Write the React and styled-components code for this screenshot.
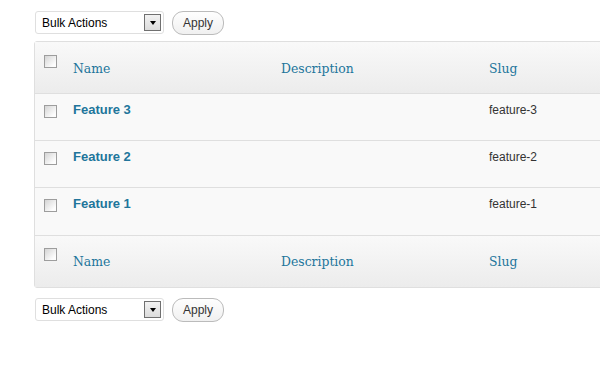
import React from "react";
import styled, { createGlobalStyle } from "styled-components";

const Global = createGlobalStyle`
  html, body { margin: 0; padding: 0; background: #fff; overflow: hidden; }
  body { font-family: "Liberation Sans", Arial, sans-serif; }
`;

const Page = styled.div`
  width: 600px;
  height: 373px;
  padding: 11px 0 0 34px;
  box-sizing: border-box;
  overflow: hidden;
`;

const Toolbar = styled.div`
  display: flex;
  align-items: center;
  gap: 8px;
  padding-left: 1px;
  height: 23px;
  margin-bottom: ${(p) => (p.$top ? "7px" : "0")};
  margin-top: ${(p) => (p.$top ? "0" : "10px")};
`;

const Select = styled.div`
  box-sizing: border-box;
  width: 129px;
  height: 23px;
  border: 1px solid #dfdfdf;
  border-radius: 3px;
  background: #fff;
  display: flex;
  align-items: center;
  justify-content: space-between;
  padding: 0 2px 0 6px;
  font-size: 12px;
  color: #000;
`;

const Arrow = styled.span`
  box-sizing: border-box;
  width: 17px;
  height: 17px;
  border: 1px solid #707070;
  background: linear-gradient(#f2f2f2, #dcdcdc);
  display: flex;
  align-items: center;
  justify-content: center;
  &::after {
    content: "";
    border-left: 3.5px solid transparent;
    border-right: 3.5px solid transparent;
    border-top: 4px solid #000;
    margin-top: 1px;
  }
`;

const Button = styled.button`
  box-sizing: border-box;
  height: 24px;
  width: 52px;
  border: 1px solid #bbb;
  border-radius: 11px;
  background: linear-gradient(#fefefe, #f0f0f0);
  color: #333;
  font-family: "Liberation Sans", Arial, sans-serif;
  font-size: 12px;
  padding: 0;
`;

const Table = styled.table`
  border-collapse: separate;
  border-spacing: 0;
  border: 1px solid #dfdfdf;
  border-radius: 3px;
  width: 760px;
  table-layout: fixed;
  background: #f9f9f9;
`;

const HeadCell = styled.th`
  height: 52px;
  box-sizing: border-box;
  padding: ${(p) => (p.$foot ? "0 8px 1px" : "2px 8px 0")};
  text-align: left;
  font-family: Georgia, "DejaVu Serif", serif;
  font-weight: normal;
  font-size: 12.4px;
  color: #21759b;
  background: linear-gradient(#f9f9f9, #ececec);
  border-top: ${(p) => (p.$foot ? "1px solid #dfdfdf" : "none")};
  border-bottom: ${(p) => (p.$foot ? "none" : "1px solid #dfdfdf")};
  vertical-align: middle;
  width: ${(p) => p.$w || "auto"};
  white-space: nowrap;
`;

const CheckCell = styled.th`
  width: 30px;
  box-sizing: border-box;
  padding: ${(p) => (p.$body ? "11px 0 0 9px" : p.$foot ? "12px 0 0 9px" : "13px 0 0 9px")};
  vertical-align: top;
  background: ${(p) => (p.$body ? "#f9f9f9" : "linear-gradient(#f9f9f9, #ececec)")};
  border-bottom: ${(p) => (p.$last || p.$foot ? "none" : "1px solid #dfdfdf")};
  border-top: ${(p) => (p.$foot ? "1px solid #dfdfdf" : "none")};
`;

const Box = styled.span`
  display: block;
  box-sizing: border-box;
  width: 13px;
  height: 13px;
  border: 1px solid #9d9d9d;
  background: linear-gradient(135deg, #d4d4d4, #fdfdfd 80%);
`;

const Cell = styled.td`
  height: 47px;
  box-sizing: border-box;
  padding: 8px 8px 0;
  vertical-align: top;
  border-bottom: ${(p) => (p.$last ? "none" : "1px solid #dfdfdf")};
  font-size: 12px;
  color: #333;
  line-height: 16px;
`;

const RowTitle = styled.a`
  font-weight: bold;
  font-size: 13px;
  color: #21759b;
  text-decoration: none;
`;

const rows = [
  { name: "Feature 3", slug: "feature-3" },
  { name: "Feature 2", slug: "feature-2" },
  { name: "Feature 1", slug: "feature-1" },
];

function Bar({ top }) {
  return (
    <Toolbar $top={top}>
      <Select>
        <span>Bulk Actions</span>
        <Arrow />
      </Select>
      <Button>Apply</Button>
    </Toolbar>
  );
}

function HeadRow({ foot }) {
  return (
    <tr>
      <CheckCell $foot={foot}><Box /></CheckCell>
      <HeadCell $foot={foot} $w="208px">Name</HeadCell>
      <HeadCell $foot={foot} $w="208px">Description</HeadCell>
      <HeadCell $foot={foot} $w="208px">Slug</HeadCell>
      <HeadCell $foot={foot} />
    </tr>
  );
}

export default function App() {
  return (
    <Page>
      <Global />
      <Bar top />
      <Table>
        <thead>
          <HeadRow />
        </thead>
        <tbody>
          {rows.map((r, i) => {
            const last = i === rows.length - 1;
            return (
              <tr key={r.slug}>
                <CheckCell $body $last={last}><Box /></CheckCell>
                <Cell $last={last}><RowTitle href="#">{r.name}</RowTitle></Cell>
                <Cell $last={last}></Cell>
                <Cell $last={last}>{r.slug}</Cell>
                <Cell $last={last}></Cell>
              </tr>
            );
          })}
        </tbody>
        <tfoot>
          <HeadRow foot />
        </tfoot>
      </Table>
      <Bar />
    </Page>
  );
}
